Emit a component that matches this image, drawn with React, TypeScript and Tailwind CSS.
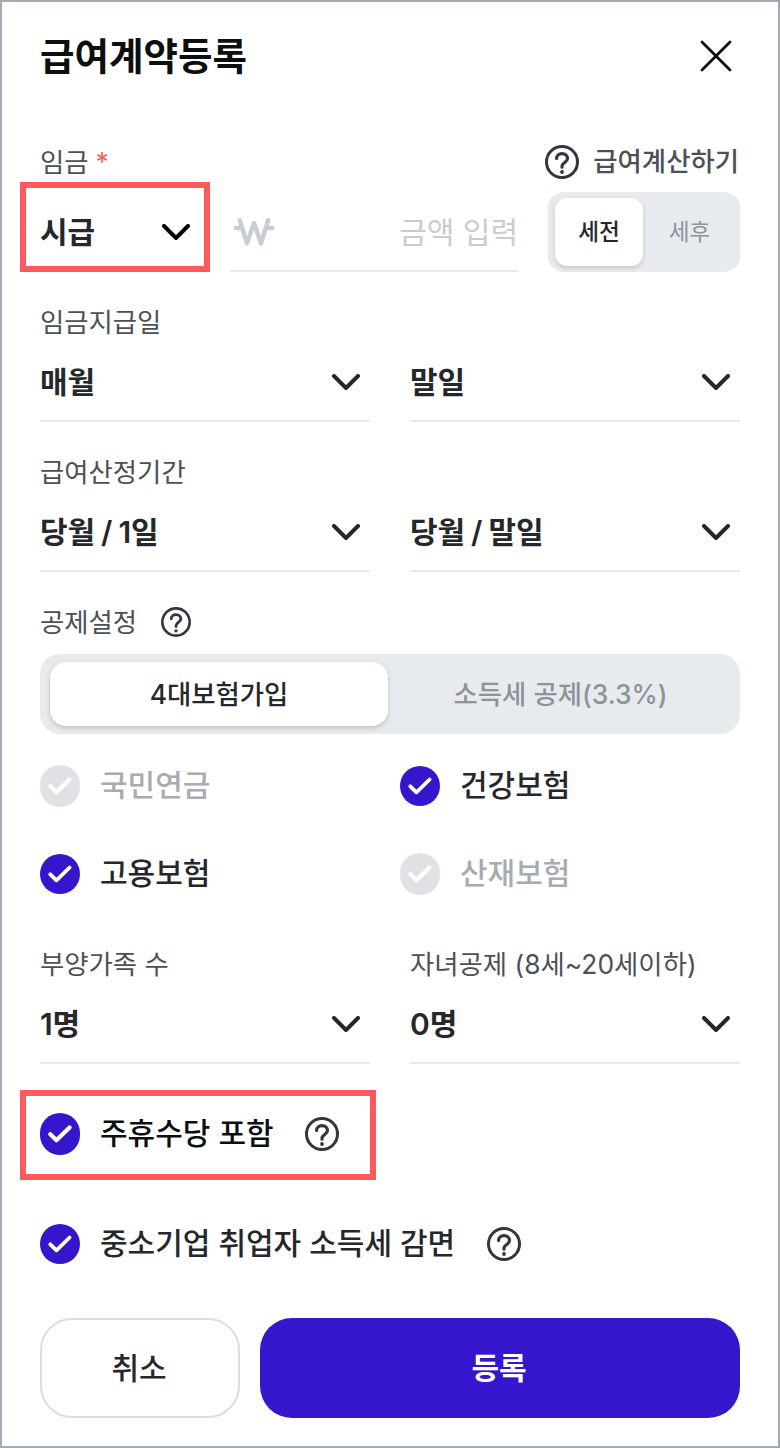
import React, { useState } from 'react';
import clsx from 'clsx';

const Chevron = ({ className = 'text-[#26272b]' }: { className?: string }) => (
  <svg className={clsx('mr-2.5 h-4 w-7 shrink-0', className)} viewBox="0 0 28 16" fill="none">
    <path d="M2 2 L14 14 L26 2" stroke="currentColor" strokeWidth="4" strokeLinecap="round" strokeLinejoin="round" />
  </svg>
);

const HelpIcon = ({ className = 'size-[34px]' }: { className?: string }) => (
  <svg className={clsx('shrink-0 text-[#33363f]', className)} viewBox="0 0 34 34" fill="none">
    <circle cx="17" cy="17" r="15.5" stroke="currentColor" strokeWidth="3" />
    <path
      d="M11.6 13.4 C11.6 10.4 14 8.6 17 8.6 C20 8.6 22.5 10.6 22.5 13.5 C22.5 17.3 17 17.6 17 21.2 V22.2"
      stroke="currentColor"
      strokeWidth="3.2"
      strokeLinecap="round"
    />
    <circle cx="17" cy="27" r="1.9" fill="currentColor" />
  </svg>
);

const WonIcon = () => (
  <svg className="h-7 w-10 shrink-0 text-[#c8cdd1]" viewBox="0 0 40 28" fill="none">
    <path
      d="M5.8 2.2 L12.9 25.4 L20 5 L27 25.4 L34.2 2.2 M2 10 H8 M32 10 H38"
      stroke="currentColor"
      strokeWidth="4.4"
      strokeLinecap="round"
      strokeLinejoin="round"
    />
  </svg>
);

const CheckMark = ({ tall }: { tall?: boolean }) => (
  <svg className="h-10 w-10" viewBox="0 0 40 40" fill="none">
    <path
      d="M10.3 20.3 L16.4 26.3 L29.6 13.5"
      stroke="white"
      strokeWidth={tall ? 4.2 : 3.8}
      strokeLinecap="round"
      strokeLinejoin="round"
    />
  </svg>
);

const Label = ({ children }: { children: React.ReactNode }) => (
  <div className="flex h-10 items-center pt-px text-[26.4px] text-[#4d5057]">{children}</div>
);

const Select = ({ value }: { value: string }) => (
  <button className="flex h-20 w-full items-center justify-between border-b-2 border-[#e8ebee] pt-0.5 text-left">
    <span className="text-[30px] font-semibold tracking-[-0.15px] text-[#26272b] [word-spacing:-1.2px]">{value}</span>
    <Chevron />
  </button>
);

type CheckProps = {
  label: string;
  disabled?: boolean;
  tall?: boolean;
  textClass?: string;
  help?: boolean;
};

const Check = ({ label, disabled, tall, textClass = 'text-[#26272b]', help }: CheckProps) => (
  <div className="flex h-10 items-center">
    <span
      className={clsx(
        'flex w-10 shrink-0 items-center justify-center rounded-full',
        tall ? 'h-[42px]' : 'h-10',
        disabled ? 'bg-[#e0e1e5]' : 'bg-[#3616cd]',
      )}
    >
      <CheckMark tall={tall} />
    </span>
    <span
      className={clsx(
        'ml-5 whitespace-nowrap pb-0.5 text-[30px] font-medium',
        disabled ? 'text-[#a7abb2]' : textClass,
      )}
    >
      {label}
    </span>
    {help && <HelpIcon className="ml-[31.5px] size-[34px]" />}
  </div>
);

const App = () => {
  const [tax, setTax] = useState('before');
  const [deduct, setDeduct] = useState('insurance');

  return (
    <div className="h-[1448px] w-[780px] border-2 border-[#a5a9b0] bg-white px-[38px] font-['Inter','Noto_Sans_CJK_KR',sans-serif]">
      {/* Header */}
      <div className="flex h-[108px] items-center justify-between pr-2">
        <h1 className="pt-0.5 text-[37.5px] font-bold text-[#0d0e10]">급여계약등록</h1>
        <svg className="size-8" viewBox="0 0 32 32" fill="none">
          <path d="M2 2 L30 30 M30 2 L2 30" stroke="#0d0e10" strokeWidth="2.8" strokeLinecap="round" />
        </svg>
      </div>

      {/* Wage */}
      <div className="mt-8 flex h-10 items-center justify-between">
        <Label>
          임금<span className="ml-[7px] text-[#f0645e]">*</span>
        </Label>
        <div className="flex items-center">
          <HelpIcon />
          <span className="ml-3.5 mr-px text-[26.4px] font-medium text-[#4d5057]">급여계산하기</span>
        </div>
      </div>
      <div className="mt-2.5 flex h-20 gap-[30px]">
        <div className="relative flex w-40 items-center justify-between">
          <span className="text-[30px] font-semibold tracking-[-0.15px] text-[#26272b]">시급</span>
          <Chevron className="text-black" />
          <div className="pointer-events-none absolute -left-5 -top-2.5 h-[90px] w-[190px] border-6 border-[#fc5a5c]" />
        </div>
        <div className="flex w-72 items-center justify-between border-b-2 border-[#e8ebee] pl-1 pt-0.5">
          <WonIcon />
          <span className="text-[30px] text-[#c8cdd1]">금액 입력</span>
        </div>
        <div className="flex w-48 rounded-2xl bg-[#e7ebee] py-1.5 pl-[7px] pr-1 text-[22.6px]">
          <button
            onClick={() => setTax('before')}
            aria-pressed={tax === 'before'}
            className="w-[88px] rounded-xl bg-white font-medium text-[#26272b] shadow-[0_2px_4px_rgba(0,0,0,0.15)]"
          >
            세전
          </button>
          <button onClick={() => setTax('after')} aria-pressed={tax === 'after'} className="flex-1 text-[#8d929b]">
            세후
          </button>
        </div>
      </div>

      {/* Pay day and pay period */}
      <div className="mt-[30px] grid grid-cols-2 gap-x-10">
        <div className="col-span-2">
          <Label>임금지급일</Label>
        </div>
        <Select value="매월" />
        <Select value="말일" />
      </div>
      <div className="mt-[30px] grid grid-cols-2 gap-x-10">
        <div className="col-span-2">
          <Label>급여산정기간</Label>
        </div>
        <Select value="당월 / 1일" />
        <Select value="당월 / 말일" />
      </div>

      {/* Deductions */}
      <div className="mt-[30px] flex items-center">
        <Label>공제설정</Label>
        <HelpIcon className="ml-6 size-[30px]" />
      </div>
      <div className="mt-3 flex h-20 rounded-[20px] bg-[#e7ebee] py-2 pl-2.5 pr-[7px] text-[26.4px] font-medium">
        <button
          onClick={() => setDeduct('insurance')}
          aria-pressed={deduct === 'insurance'}
          className="w-[338px] rounded-2xl bg-white pt-0.5 text-[#26272b] shadow-[0_2px_5px_rgba(0,0,0,0.18)]"
        >
          4대보험가입
        </button>
        <button
          onClick={() => setDeduct('income')}
          aria-pressed={deduct === 'income'}
          className="flex-1 pt-0.5 text-[#8d929b]"
        >
          소득세 공제(3.3%)
        </button>
      </div>

      <div className="mt-8 grid grid-cols-[360px_1fr] gap-y-12">
        <Check label="국민연금" disabled tall />
        <Check label="건강보험" />
        <Check label="고용보험" />
        <Check label="산재보험" disabled tall />
      </div>

      {/* Family */}
      <div className="mt-[50px] grid grid-cols-2 gap-x-10">
        <Label>부양가족 수</Label>
        <Label>자녀공제 (8세~20세이하)</Label>
        <Select value="1명" />
        <Select value="0명" />
      </div>

      <div className="relative mt-[50px]">
        <Check label="주휴수당 포함" tall textClass="text-[#0d0e10]" help />
        <div className="pointer-events-none absolute -left-5 -top-6 h-[90px] w-[356px] border-6 border-[#fc5a5c]" />
      </div>
      <div className="mt-[70px]">
        <Check label="중소기업 취업자 소득세 감면" help />
      </div>

      {/* Actions */}
      <div className="mt-[54px] flex h-[100px] gap-5 text-[30px]">
        <button className="w-[200px] rounded-[32px] border-2 border-[#dcdddf] pr-0.5 font-medium text-[#26272b]">
          취소
        </button>
        <button className="flex-1 rounded-[32px] bg-[#3616cd] pr-0.5 font-bold text-white">등록</button>
      </div>
    </div>
  );
};

export default App;
